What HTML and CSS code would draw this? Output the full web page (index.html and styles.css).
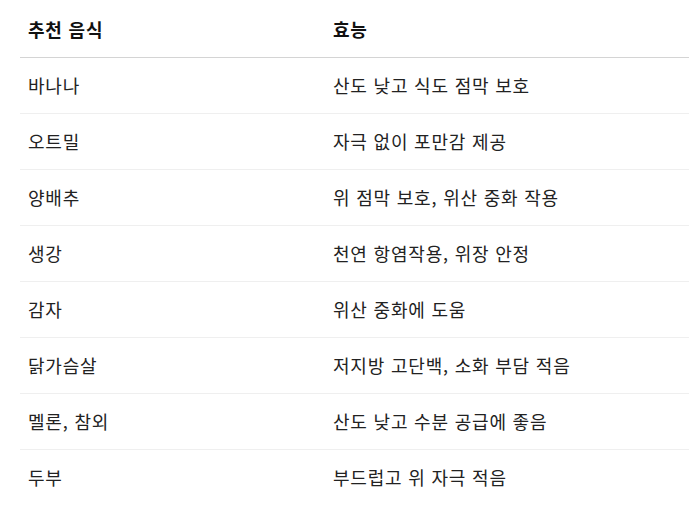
FILE: index.html
```html
<!DOCTYPE html>
<html lang="ko">
<head>
<meta charset="utf-8">
<link rel="stylesheet" href="styles.css">
</head>
<body>
<table class="food-table">
  <thead>
    <tr><th class="col-food">추천 음식</th><th>효능</th></tr>
  </thead>
  <tbody>
    <tr><td>바나나</td><td>산도 낮고 식도 점막 보호</td></tr>
    <tr><td>오트밀</td><td>자극 없이 포만감 제공</td></tr>
    <tr><td>양배추</td><td>위 점막 보호, 위산 중화 작용</td></tr>
    <tr><td>생강</td><td>천연 항염작용, 위장 안정</td></tr>
    <tr><td>감자</td><td>위산 중화에 도움</td></tr>
    <tr><td>닭가슴살</td><td>저지방 고단백, 소화 부담 적음</td></tr>
    <tr><td>멜론, 참외</td><td>산도 낮고 수분 공급에 좋음</td></tr>
    <tr><td>두부</td><td>부드럽고 위 자극 적음</td></tr>
  </tbody>
</table>
</body>
</html>
```
FILE: styles.css
```css
html, body {
  margin: 0;
  padding: 0;
  background: #ffffff;
}
body {
  font-family: "Noto Sans CJK KR", "Noto Sans", sans-serif;
  font-size: 18px;
  letter-spacing: 0.8px;
  color: #222222;
  padding-left: 20px;
}
.food-table {
  border-collapse: collapse;
  width: 700px;
}
.food-table th,
.food-table td {
  text-align: left;
  padding: 16px 8px;
  line-height: 23px;
  vertical-align: middle;
}
.food-table th {
  font-weight: 700;
  color: #111111;
  padding-top: 18px;
  padding-bottom: 16px;
  border-bottom: 1px solid #d4d4d4;
}
.food-table .col-food {
  width: 289px;
}
.food-table tbody td {
  border-bottom: 1px solid #efefef;
}
.food-table tbody tr:last-child td {
  border-bottom: none;
}
```
